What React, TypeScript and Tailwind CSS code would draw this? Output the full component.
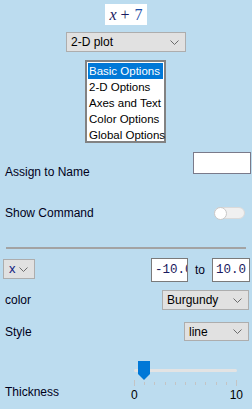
function Chevron() {
  return (
    <svg width="9" height="5" viewBox="0 0 9 5" className="shrink-0">
      <polyline points="0.5,0.5 4.5,4.5 8.5,0.5" fill="none" stroke="#6b6b6b" strokeWidth="1" />
    </svg>
  );
}

function Select({ label, className }: { label: string; className: string }) {
  return (
    <div
      className={`flex items-center justify-between border border-[#adadad] bg-[#e1e1e1] pl-[4px] pr-[6px] text-[12px] text-black ${className}`}
    >
      <span>{label}</span>
      <Chevron />
    </div>
  );
}

const options = ["Basic Options", "2-D Options", "Axes and Text", "Color Options", "Global Options"];

export default function App() {
  return (
    <div
      className="flex h-[409px] w-[252px] flex-col overflow-hidden bg-[#bcdcef] text-[12px] leading-[16px] text-[#00001a]"
      style={{ fontFamily: '"Liberation Sans", Arial, sans-serif' }}
    >
      {/* formula */}
      <div className="mx-auto mt-[4px] flex h-[21px] w-[42px] items-center justify-center bg-white text-[16px] leading-none text-[#1a1a60]">
        <span style={{ fontFamily: '"Liberation Serif", serif' }} className="italic">
          x
        </span>
        <span style={{ fontFamily: '"Liberation Serif", serif' }} className="ml-[4px]">
          +
        </span>
        <span style={{ fontFamily: '"Liberation Serif", serif' }} className="ml-[5px] text-[#1f4fa8]">
          7
        </span>
      </div>

      <Select label="2-D plot" className="ml-[66px] mt-[7px] h-[20px] w-[120px]" />

      {/* option list */}
      <div className="ml-[85px] mt-[8px] flex h-[83px] w-[81px] flex-col border-2 border-[#828282] bg-white px-[1px] py-[1px]">
        {options.map((o, i) => (
          <div
            key={o}
            className={`h-[16px] whitespace-nowrap pl-[1px] text-[11.5px] leading-[16px] ${
              i === 0 ? "bg-[#0078d7] text-white" : "text-black"
            }`}
          >
            {o}
          </div>
        ))}
      </div>

      {/* assign to name */}
      <div className="mt-[9px] flex items-start justify-between pl-[5px] pr-[1px]">
        <span className="mt-[12px]">Assign to Name</span>
        <div className="h-[22px] w-[58px] border border-[#7a7a8a] bg-white" />
      </div>

      {/* show command */}
      <div className="mt-[25px] flex h-[16px] items-center justify-between pl-[5px] pr-[7px]">
        <span>Show Command</span>
        <div className="flex h-[12px] w-[31px] items-center rounded-full border border-[#dadada] bg-[#f0f0f0]">
          <div className="-ml-[1px] h-[13px] w-[13px] rounded-full border border-[#c8c8c8] bg-white" />
        </div>
      </div>

      <div className="mx-[6px] mt-[26px] h-[2px] bg-[#a3a3a3]" />

      {/* range row */}
      <div className="mt-[9px] flex items-start pl-[3px] pr-[2px]">
        <div className="mt-[1px] flex h-[20px] w-[32px] items-center justify-between border border-[#adadad] bg-[#e1e1e1] pl-[5px] pr-[6px]">
          <span className="text-[13px] text-[#102080]">x</span>
          <Chevron />
        </div>
        <div className="ml-auto flex items-center">
          <div
            className="flex h-[24px] w-[37px] items-center overflow-hidden whitespace-nowrap border border-[#7a7a7a] bg-white pl-[3px] text-[12.5px] text-[#1a1a60]"
            style={{ fontFamily: '"Liberation Mono", monospace' }}
          >
            -10.0
          </div>
          <span className="mx-[7px]">to</span>
          <div
            className="flex h-[24px] w-[38px] items-center overflow-hidden whitespace-nowrap border border-[#7a7a7a] bg-white pl-[3px] text-[12.5px] text-[#1a1a60]"
            style={{ fontFamily: '"Liberation Mono", monospace' }}
          >
            10.0
          </div>
        </div>
      </div>

      {/* color */}
      <div className="mt-[8px] flex items-center justify-between pl-[5px] pr-[3px]">
        <span>color</span>
        <Select label="Burgundy" className="h-[20px] w-[87px]" />
      </div>

      {/* style */}
      <div className="mt-[12px] flex items-center justify-between pl-[5px] pr-[3px]">
        <span>Style</span>
        <Select label="line" className="h-[19px] w-[65px]" />
      </div>

      {/* thickness */}
      <div className="mt-[20px] flex items-end pl-[5px]">
        <span className="mb-[1px]">Thickness</span>
        <div className="ml-[75px] flex w-[103px] flex-col">
          <div className="relative h-[19px]">
            <div className="absolute left-0 right-0 top-[8px] h-[3px] rounded-full bg-[#e3e3e3]" />
            <svg width="12" height="19" viewBox="0 0 12 19" className="absolute left-[4px] top-0">
              <polygon points="0,0 12,0 12,13 6,19 0,13" fill="#0078d7" />
            </svg>
          </div>
          <div className="flex h-[6px] items-start justify-between">
            {Array.from({ length: 11 }).map((_, i) => (
              <div
                key={i}
                className={`w-[1px] bg-[#c4c4c4] ${i === 0 || i === 10 ? "h-[6px]" : "mt-[2px] h-[3px]"}`}
              />
            ))}
          </div>
          <div className="mt-[3px] flex justify-between text-[12px] leading-[12px] text-black">
            <span className="-ml-[3px]">0</span>
            <span className="-mr-[6px]">10</span>
          </div>
        </div>
      </div>
    </div>
  );
}
